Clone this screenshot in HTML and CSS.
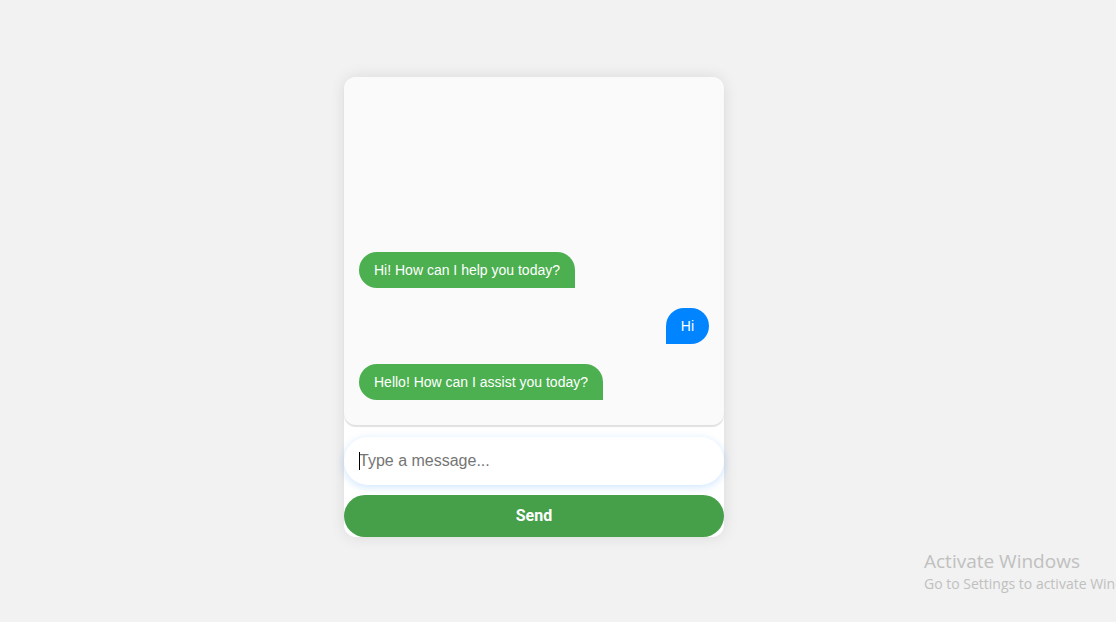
FILE: index.html
```html
<!DOCTYPE html>
<html lang="en">
<head>
<meta charset="utf-8">
<title>Chat</title>
<link rel="stylesheet" href="styles.css">
</head>
<body>
<div class="page">
  <div class="chat">
    <div class="messages">
      <div class="msg bot">Hi! How can I help you today?</div>
      <div class="msg user">Hi</div>
      <div class="msg bot">Hello! How can I assist you today?</div>
    </div>
    <div class="caret-wrap"><span class="caret"></span><input class="input" type="text" placeholder="Type a message..."></div>
    <button class="send">Send</button>
  </div>
</div>
<div class="activate">
  <div class="a-title">Activate Windows</div>
  <div class="a-sub">Go to Settings to activate Windows.</div>
</div>
</body>
</html>
```
FILE: styles.css
```css
html, body {
  margin: 0;
  padding: 0;
  background: #f2f2f2;
  height: 100%;
  overflow: hidden;
  font-family: "Liberation Sans", Arial, sans-serif;
}
.page {
  display: flex;
  justify-content: center;
  padding-top: 77px;
}
.chat {
  width: 380px;
  margin-left: -48px;
  background: #ffffff;
  border-radius: 12px;
  box-shadow: 0 0 16px rgba(0, 0, 0, 0.1);
  display: flex;
  flex-direction: column;
}
.messages {
  height: 348px;
  box-sizing: border-box;
  background: #fafafa;
  border-radius: 12px;
  box-shadow: 0 2px 1px rgba(0, 0, 0, 0.12);
  display: flex;
  flex-direction: column;
  justify-content: flex-end;
  gap: 20px;
  padding: 15px 15px 25px;
}
.msg {
  font-size: 14px;
  line-height: 16px;
  padding: 10px 15px;
  color: #ffffff;
  max-width: 75%;
}
.bot {
  align-self: flex-start;
  background: #4caf50;
  border-radius: 18px 18px 0 18px;
}
.user {
  align-self: flex-end;
  background: #0084ff;
  border-radius: 18px 18px 18px 0;
}
.caret-wrap {
  position: relative;
  margin-top: 12px;
}
.caret {
  position: absolute;
  left: 15px;
  top: 15px;
  width: 1px;
  height: 18px;
  background: #000;
}
.input {
  display: block;
  width: 100%;
  height: 48px;
  box-sizing: border-box;
  border: none;
  outline: none;
  border-radius: 24px;
  padding: 0 15px;
  font-family: "Liberation Sans", Arial, sans-serif;
  font-size: 16px;
  background: #ffffff;
  box-shadow: 0 2px 8px rgba(0, 123, 255, 0.2);
}
.input::placeholder {
  color: #757575;
}
.send {
  margin-top: 10px;
  height: 42px;
  padding: 0 0 2px;
  border: none;
  border-radius: 21px;
  background: #45a049;
  color: #ffffff;
  font-family: Roboto, "Liberation Sans", sans-serif;
  font-weight: bold;
  font-size: 16px;
}
.activate {
  position: absolute;
  left: 924px;
  top: 549px;
  color: #c0c0c0;
  font-family: "Open Sans", "Noto Sans", sans-serif;
  white-space: nowrap;
}
.a-title {
  font-size: 19px;
  line-height: 24px;
}
.a-sub {
  font-size: 14px;
  line-height: 21px;
}
```
